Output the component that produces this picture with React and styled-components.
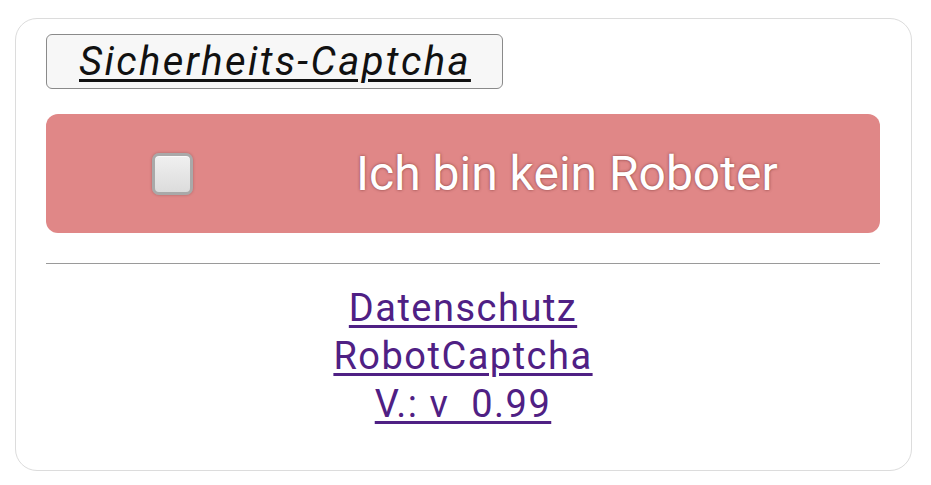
import React from 'react';
import styled, { createGlobalStyle } from 'styled-components';

const GlobalStyle = createGlobalStyle`
  html, body {
    margin: 0;
    padding: 0;
    background: #ffffff;
    font-family: Roboto, "Liberation Sans", sans-serif;
  }
`;

const Page = styled.div`
  padding: 18px 20px 15px 15px;
`;

const Card = styled.div`
  box-sizing: border-box;
  width: 897px;
  height: 453px;
  border: 1px solid #dcdcdc;
  border-radius: 22px;
  padding: 15px 31px 0 30px;
  display: flex;
  flex-direction: column;
`;

const TitleButton = styled.button`
  align-self: flex-start;
  box-sizing: border-box;
  height: 55px;
  padding: 0 31px 0 32px;
  border: 1px solid #8a8a8a;
  border-radius: 6px;
  background: #f7f7f7;
  color: #111;
  font-family: Roboto, "Liberation Sans", sans-serif;
  font-style: italic;
  font-size: 40px;
  letter-spacing: 2.4px;
  text-decoration: underline;
  text-decoration-thickness: 3px;
  text-underline-offset: 4px;
  cursor: pointer;
`;

const RobotBar = styled.label`
  margin-top: 25px;
  height: 119px;
  border-radius: 12px;
  background: #e08787;
  display: flex;
  align-items: center;
  padding-left: 106px;
  gap: 163px;
  cursor: pointer;
`;

const CheckBox = styled.span`
  box-sizing: border-box;
  width: 41px;
  height: 42px;
  border: 3px solid #a9a9a9;
  border-radius: 7px;
  background: linear-gradient(#f0f0f0, #dcdcdc);
  box-shadow: 0 0 3px rgba(0, 0, 0, 0.25), inset 0 1px 0 #fafafa;
`;

const BarText = styled.span`
  color: #ffffff;
  font-size: 48px;
  text-shadow: 0 0 3px rgba(90, 30, 30, 0.7);
`;

const Divider = styled.hr`
  margin: 30px 0 0;
  border: none;
  border-top: 1px solid #9a9a9a;
`;

const Links = styled.div`
  margin-top: 20px;
  display: flex;
  flex-direction: column;
  align-items: center;
`;

const FooterLink = styled.a`
  color: #4f2084;
  font-size: 38px;
  letter-spacing: 1.5px;
  line-height: 48px;
  text-decoration: underline;
  text-decoration-thickness: 3px;
  text-underline-offset: 4px;
`;

export default function App() {
  return (
    <>
      <GlobalStyle />
      <Page>
        <Card>
          <TitleButton>Sicherheits-Captcha</TitleButton>
          <RobotBar>
            <CheckBox />
            <BarText>Ich bin kein Roboter</BarText>
          </RobotBar>
          <Divider />
          <Links>
            <FooterLink href="#datenschutz">Datenschutz</FooterLink>
            <FooterLink href="#robotcaptcha">RobotCaptcha</FooterLink>
            <FooterLink href="#version">V.: v&nbsp; 0.99</FooterLink>
          </Links>
        </Card>
      </Page>
    </>
  );
}
